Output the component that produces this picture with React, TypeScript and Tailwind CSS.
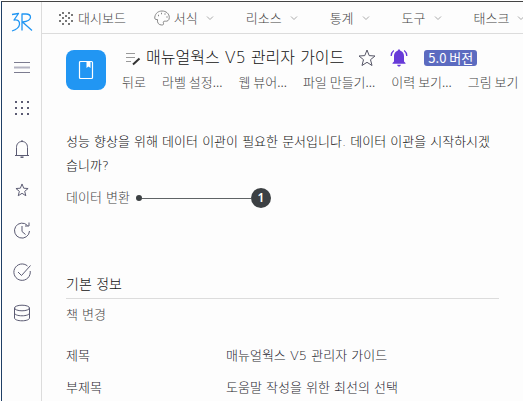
import type { ReactNode } from "react"

const menus = [
  { label: "리소스" },
  { label: "통계" },
  { label: "도구" },
  { label: "태스크" },
]

const actions = ["뒤로", "라벨 설정...", "웹 뷰어...", "파일 만들기...", "이력 보기...", "그림 보기"]

const info = [
  { label: "제목", value: "매뉴얼웍스 V5 관리자 가이드" },
  { label: "부제목", value: "도움말 작성을 위한 최선의 선택" },
]

const starPath = "M9 1l2.200 5.600 5.800.4-4.500 3.700 1.500 5.800L9 13.300l-5 3.200 1.500-5.800L1 7l5.800-.4z"

function Chevron() {
  return (
    <svg viewBox="0 0 8 8" className="h-2 w-2" fill="none" stroke="#aaa" strokeWidth="1">
      <path d="M1 2.5l3 3 3-3" />
    </svg>
  )
}

function Logo() {
  return (
    <svg viewBox="0 0 22 20" className="h-5 w-[22px]" fill="none" stroke="#2196f3" strokeWidth="1.3" strokeLinejoin="round">
      <path d="M1 2.500L7.500 1.500 3 8c4-.5 5.800 1.300 5.500 4.500-.4 3-3 5-7.500 6.500" />
      <path d="M11 18.500V2h4c3 0 4.500 1 4.500 3.300S17 9.500 11.500 10l9.500 8.500" />
    </svg>
  )
}

function SideButton({ label, children }: { label: string; children: ReactNode }) {
  return (
    <button type="button" aria-label={label} className="flex h-[41px] w-full items-center justify-center">
      <svg viewBox="0 0 18 18" className="h-[18px] w-[18px]" fill="none" stroke="#5b5b73" strokeWidth="1">
        {children}
      </svg>
    </button>
  )
}

function Sidebar() {
  return (
    <aside className="flex w-10 shrink-0 flex-col border-r border-[#dcdcdc]">
      <a href="#" aria-label="홈" className="flex justify-center pt-2.5 pb-3.5">
        <Logo />
      </a>
      <SideButton label="메뉴">
        <path d="M1 4.500h16M1 14.500h16" stroke="#7c7c90" />
        <path d="M1 9.500h16" stroke="#b4b4c2" strokeWidth="2" />
      </SideButton>
      <SideButton label="앱">
        <g fill="#5b5b73" stroke="none">
          {[2, 8, 14].map((y) =>
            [2, 8, 14].map((x) => <rect key={`${x}-${y}`} x={x} y={y} width="2" height="2" />)
          )}
        </g>
      </SideButton>
      <SideButton label="알림">
        <path d="M3.500 15.500V7.500c0-3.500 2-6 5.500-6s5.500 2.500 5.500 6v8M2 15.500h14M9 0v1.500" />
        <path d="M7.500 17.200h3" strokeWidth="1.500" />
      </SideButton>
      <SideButton label="즐겨찾기">
        <g transform="translate(2.200 2.200) scale(.76)">
          <path d={starPath} strokeWidth="1.300" />
        </g>
      </SideButton>
      <SideButton label="최근 기록">
        <path d="M14.500 3.500A7.500 7.500 0 1 0 16.500 9M9 4v5.500l3.500 3" />
        <path d="M12 4h4V0.500" />
      </SideButton>
      <SideButton label="확인">
        <path d="M14.500 3A8.200 8.200 0 1 0 17.200 8M5 9l3.500 3.500L17.500 2.500" />
      </SideButton>
      <SideButton label="데이터">
        <ellipse cx="9" cy="4" rx="7.500" ry="2.800" />
        <path d="M1.500 4v10c0 1.600 3.300 2.800 7.500 2.800s7.500-1.200 7.500-2.800V4M1.500 9c0 1.600 3.300 2.800 7.500 2.800s7.500-1.200 7.500-2.800" />
      </SideButton>
    </aside>
  )
}

function TopBar() {
  return (
    <nav className="flex h-8 items-center overflow-hidden border-b border-[#dcdcdc] pl-[17px] whitespace-nowrap text-[#444]">
      <button type="button" className="mr-7 flex shrink-0 items-center gap-[5px]">
        <svg viewBox="0 0 14 14" className="h-3.5 w-3.5" fill="#777">
          <path d="M3 1h2v2H3zM9 1h2v2H9zM0 3h2v2H0zM6 4h2v2H6zM12 3h2v2h-2zM3 6h2v2H3zM9 6h2v2H9zM0 9h2v2H0zM6 9h2v2H6zM12 9h2v2h-2zM3 12h2v2H3zM9 12h2v2H9z" />
        </svg>
        대시보드
      </button>
      <button type="button" className="mr-8 flex shrink-0 items-center gap-2">
        <span className="flex items-center gap-1">
          <svg viewBox="0 0 16 16" className="h-4 w-4" fill="none" stroke="#888">
            <path d="M3.500 9.500C1 10 .5 8.500.8 7 1.500 3 4.500 1 8 1c4 0 7.300 2.700 7.300 6.500 0 3-2 4-4 3.700-2-.2-2.300.8-1.800 2 .4 1.300-.4 1.800-1.700 1.800-3 0-4.800-2-4.300-5.500z" />
            <path d="M4 5.500h1M7 3.500h1M10.500 4h1M12.500 7h1" strokeWidth="1.500" />
          </svg>
          서식
        </span>
        <Chevron />
      </button>
      {menus.map((menu) => (
        <button key={menu.label} type="button" className="mr-8 flex shrink-0 items-center gap-2">
          {menu.label}
          <Chevron />
        </button>
      ))}
    </nav>
  )
}

function DocumentHeader() {
  return (
    <header className="flex gap-4 pt-4 pl-6">
      <div className="flex h-10 w-10 shrink-0 items-center justify-center rounded-lg bg-[#2196f3]">
        <svg viewBox="0 0 16 20" className="h-5 w-4" fill="none" stroke="#fff" strokeWidth="1.2">
          <rect x="1.500" y="1.500" width="13" height="17" rx="1" />
          <path d="M8.500 2h4v6l-2-1.500-2 1.500z" fill="#fff" stroke="none" />
        </svg>
      </div>
      <div className="-mt-1 min-w-0 overflow-hidden whitespace-nowrap">
        <div className="flex h-6 items-center">
          <svg viewBox="0 0 16 16" className="mr-1 ml-1 h-4 w-4" fill="none" stroke="#999">
            <path d="M0 3.500h9M0 7.500h9M0 11.500h5" />
            <path d="M7 14.500l6.500-6" stroke="#333" strokeWidth="2" />
          </svg>
          <h1 className="mr-3.5 font-['DejaVu_Sans','Noto_Sans_CJK_KR',sans-serif] text-base text-[#111]">
            매뉴얼웍스 V5 관리자 가이드
          </h1>
          <button type="button" aria-label="즐겨찾기 추가" className="mr-3.5">
            <svg viewBox="0 0 18 18" className="h-[18px] w-[18px]" fill="none" stroke="#555566">
              <path d={starPath} />
            </svg>
          </button>
          <button type="button" aria-label="알림 설정" className="mr-4">
            <svg viewBox="0 0 18 18" className="h-[18px] w-[18px]" fill="#673ad8">
              <path d="M9 0.500c.8 0 1.300.5 1.300 1.200C12.800 2.300 14 4.500 14 7v5.500l1.500 1.500v.8h-13V14L4 12.500V7c0-2.500 1.200-4.700 3.700-5.300 0-.7.5-1.200 1.300-1.200zM7.200 15.700h3.600c0 1-.8 1.800-1.800 1.800s-1.800-.8-1.800-1.800z" />
              <path d="M3.800 1.500C2.200 2.700 1.300 4.500 1.200 7M14.200 1.500c1.600 1.200 2.500 3 2.600 5.500" fill="none" stroke="#673ad8" strokeWidth="1.300" />
            </svg>
          </button>
          <span className="flex h-4 items-center rounded-[3px] bg-[#5c6bc0] px-1 text-[13px] font-normal text-white">5.0 버전</span>
        </div>
        <div className="flex h-6 items-center gap-4 text-[#444]">
          {actions.map((action) => (
            <button key={action} type="button" className="shrink-0">
              {action}
            </button>
          ))}
        </div>
      </div>
    </header>
  )
}

export default function App() {
  return (
    <div className="h-screen overflow-hidden bg-white pt-px pl-px font-['Noto_Sans_CJK_KR','Noto_Sans',sans-serif] text-[13px] leading-5 font-light">
      <div className="flex h-full border-t border-l border-t-[#444] border-l-[#1f3f66] bg-[#fdfdfd]">
        <Sidebar />
        <div className="min-w-0 flex-1">
          <TopBar />
          <DocumentHeader />
          <main className="px-6 pt-9 font-['DejaVu_Sans','Noto_Sans_CJK_KR',sans-serif]">
            <p className="break-all leading-6 text-[#111]">
              성능 향상을 위해 데이터 이관이 필요한 문서입니다. 데이터 이관을 시작하시겠습니까?
            </p>
            <div className="mt-2.5 flex h-5 items-center">
              <button type="button" className="mr-1.5 text-[#444]">데이터 변환</button>
              <span className="h-1.5 w-1.5 rounded-full bg-[#3c4043]" />
              <span className="h-px w-[109px] bg-[#5f6366]" />
              <span className="flex h-5 w-5 items-center justify-center rounded-full bg-[#3c4043] font-['Noto_Sans'] text-xs font-semibold text-white">
                1
              </span>
            </div>
            <section>
              <h2 className="mt-[66px] border-b border-[#dcdcdc] pb-1 text-sm leading-5 text-[#111]">기본 정보</h2>
              <button type="button" className="mt-1.5 block text-[#444]">책 변경</button>
              <table className="mt-[15px] w-full text-left text-[#1f1f30]">
                <tbody>
                  {info.map((row) => (
                    <tr key={row.label} className="h-8">
                      <th scope="row" className="w-40 p-0 font-light">{row.label}</th>
                      <td className="p-0">{row.value}</td>
                    </tr>
                  ))}
                </tbody>
              </table>
            </section>
          </main>
        </div>
      </div>
    </div>
  )
}
